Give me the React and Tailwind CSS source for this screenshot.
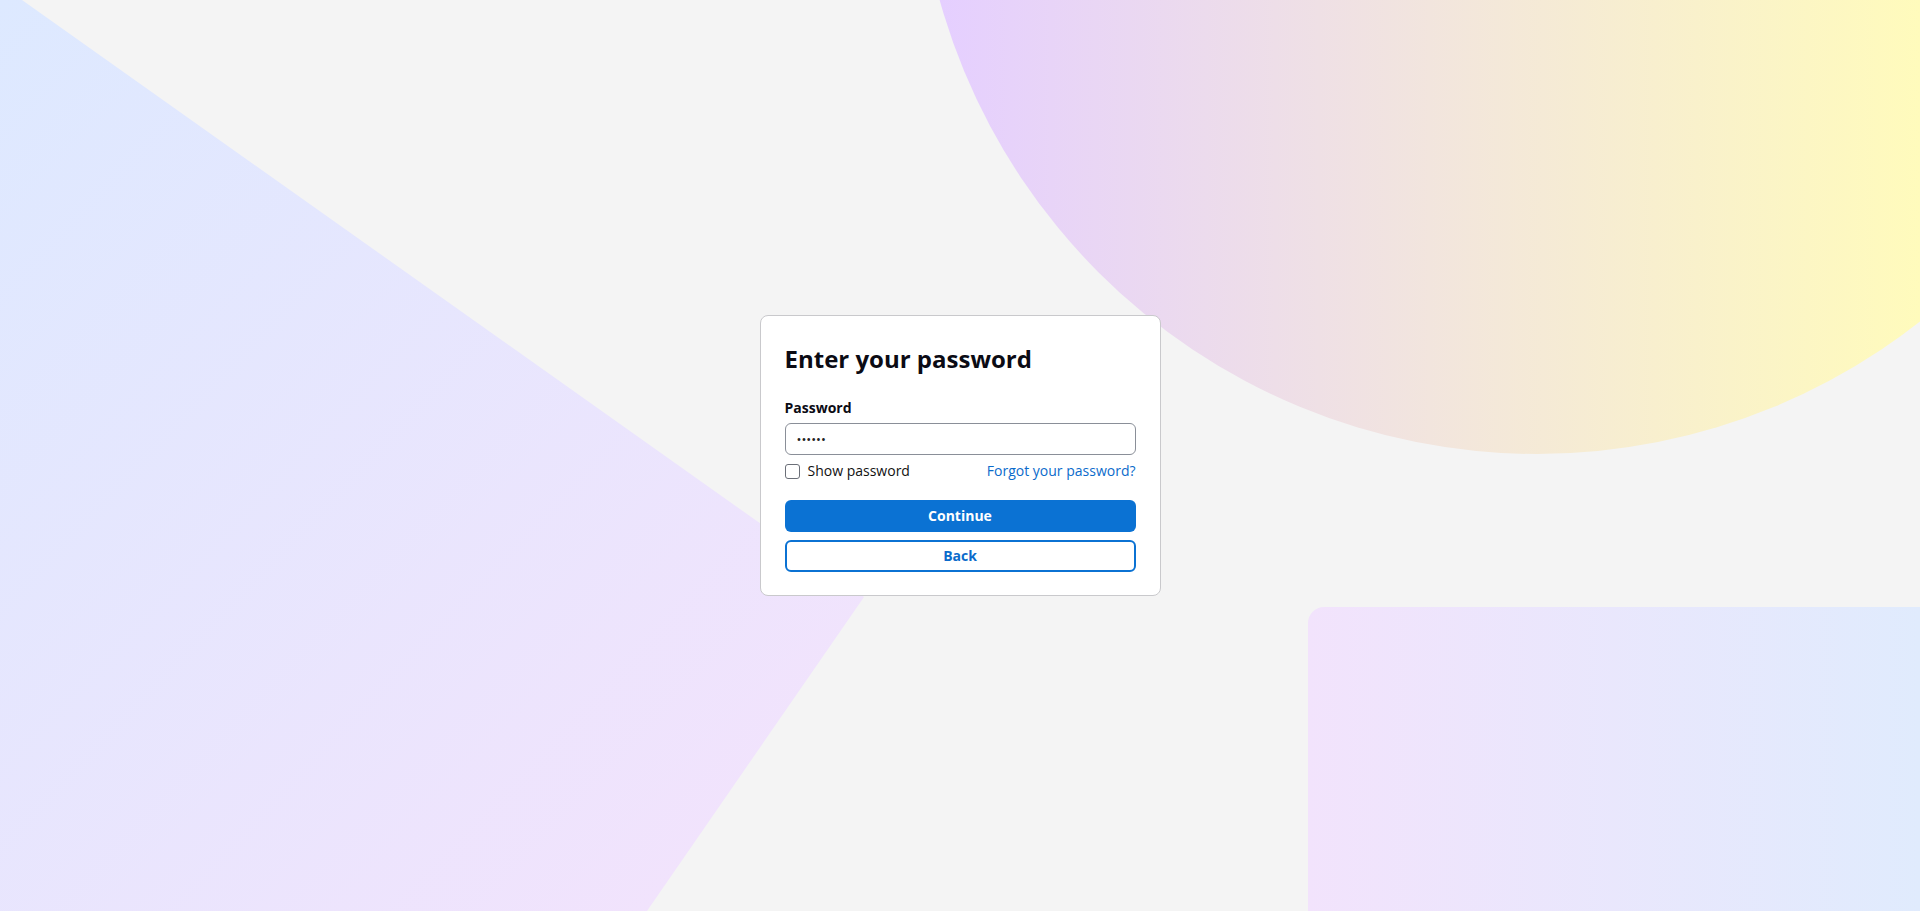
import React, { useState } from "react";

function Backdrop() {
  return (
    <svg
      className="absolute inset-0 h-full w-full"
      viewBox="0 0 1920 911"
      preserveAspectRatio="none"
      aria-hidden="true"
    >
      <defs>
        <linearGradient id="wedge" x1="0" y1="0" x2="1" y2="1">
          <stop offset="0%" stopColor="#dde9ff" />
          <stop offset="100%" stopColor="#f4e2fc" />
        </linearGradient>
        <linearGradient id="sun" gradientUnits="userSpaceOnUse" x1="940" y1="0" x2="1920" y2="0">
          <stop offset="0%" stopColor="#e5cfff" />
          <stop offset="100%" stopColor="#fffbbc" />
        </linearGradient>
        <linearGradient id="slab" x1="0" y1="0" x2="1" y2="0">
          <stop offset="0%" stopColor="#f2e3fc" />
          <stop offset="100%" stopColor="#e0ebfd" />
        </linearGradient>
      </defs>
      <polygon points="0,0 22,0 864,597 647,911 0,911" fill="url(#wedge)" />
      <circle cx="1537" cy="-166" r="620" fill="url(#sun)" />
      <path d="M1324,607 H1920 V911 H1308 V623 A16,16 0 0 1 1324,607 Z" fill="url(#slab)" />
    </svg>
  );
}

export default function App() {
  const [show, setShow] = useState(false);

  return (
    <div
      className="relative flex h-[911px] w-full items-center justify-center overflow-hidden bg-[#f4f4f4]"
      style={{ fontFamily: '"Open Sans", "Noto Sans", sans-serif' }}
    >
      <Backdrop />
      <div className="relative w-[401px] rounded-lg border border-[#c9c9cc] bg-white px-6 pt-[25px] pb-[23px]">
        <h1 className="text-2xl leading-[36px] font-bold text-[#0b0b14]">Enter your password</h1>

        <label className="mt-[21px] block text-sm leading-5 font-bold text-[#0b0b14]">Password</label>
        <input
          type={show ? "text" : "password"}
          defaultValue="123456"
          className="mt-[5px] block h-8 w-full rounded-md border border-[#8a8f98] bg-white px-[11px] text-[13px] text-[#222] outline-none"
        />

        <div className="mt-[6px] flex h-5 items-center justify-between">
          <label className="flex items-center gap-[8px] text-sm text-[#111]">
            <input
              type="checkbox"
              checked={show}
              onChange={() => setShow(!show)}
              className="h-[15px] w-[15px] appearance-none rounded-[3px] border border-[#6b6f78] bg-white"
            />
            Show password
          </label>
          <a href="#" className="text-sm text-[#0b6bcb]">
            Forgot your password?
          </a>
        </div>

        <button className="mt-[19px] flex h-8 w-full items-center justify-center rounded-md bg-[#0b72d3] text-sm font-bold text-white">
          Continue
        </button>
        <button className="mt-2 flex h-8 w-full items-center justify-center rounded-md border-2 border-[#0b72d3] bg-white text-sm font-bold text-[#0b6bcb]">
          Back
        </button>
      </div>
    </div>
  );
}
